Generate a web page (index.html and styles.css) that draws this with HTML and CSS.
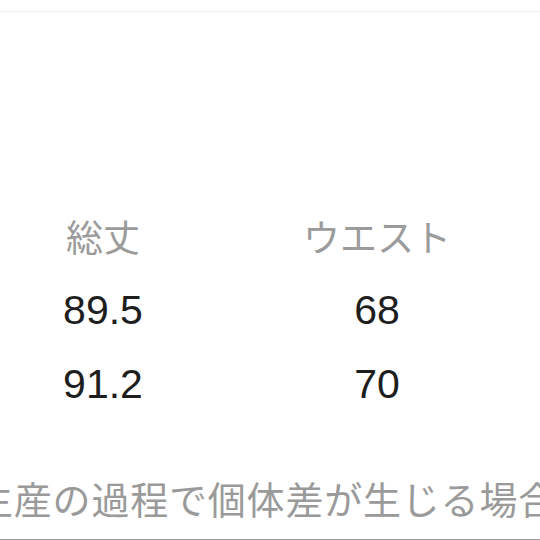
FILE: index.html
```html
<!DOCTYPE html>
<html lang="ja">
<head>
<meta charset="utf-8">
<link rel="stylesheet" href="styles.css">
</head>
<body>
<div class="page">
  <div class="topbar"></div>
  <div class="sizes">
    <div class="head">総丈</div>
    <div class="head">ウエスト</div>
    <div class="num">89.5</div>
    <div class="num">68</div>
    <div class="num">91.2</div>
    <div class="num">70</div>
  </div>
  <div class="note">生産の過程で個体差が生じる場合があります。</div>
  <div class="bottomline"></div>
</div>
</body>
</html>
```
FILE: styles.css
```css
html, body {
  margin: 0;
  padding: 0;
  background: #fff;
}
.page {
  width: 540px;
  height: 540px;
  display: flex;
  flex-direction: column;
  overflow: hidden;
  font-family: "Liberation Sans", "Noto Sans CJK JP", sans-serif;
}
.topbar {
  height: 11px;
  border-bottom: 1px solid #efefef;
  flex: none;
}
.sizes {
  margin-top: 187px;
  padding-left: 23px;
  display: grid;
  grid-template-columns: 160px 160px;
  column-gap: 114px;
  grid-auto-rows: 74px;
  flex: none;
}
.head {
  font-family: "Noto Sans CJK JP", sans-serif;
  font-size: 37px;
  color: #9b9b9b;
  line-height: 74px;
  text-align: center;
}
.num {
  font-size: 41px;
  color: #1e1e1e;
  line-height: 74px;
  text-align: center;
}
.note {
  margin-top: 52px;
  margin-left: -25px;
  font-family: "Noto Sans CJK JP", sans-serif;
  font-size: 38px;
  letter-spacing: 0.8px;
  line-height: 50px;
  color: #9a9a9a;
  white-space: nowrap;
  flex: none;
}
.bottomline {
  margin-top: auto;
  height: 1px;
  background: #9a9a9a;
  flex: none;
}
```
